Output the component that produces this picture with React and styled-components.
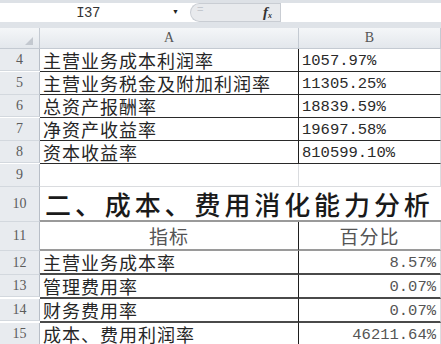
import React from "react";
import styled, { createGlobalStyle } from "styled-components";

const GlobalStyle = createGlobalStyle`
  html, body { margin: 0; padding: 0; background: #fff; overflow: hidden; }
  #root { width: 441px; height: 344px; overflow: hidden; }
`;

const CJK = `"Noto Sans CJK SC", "Noto Sans", sans-serif`;
const MONO = `"Liberation Mono", "Noto Sans CJK SC", monospace`;

const rows = [
  { n: 4, h: 22, a: "主营业务成本利润率", b: "1057.97%", line: "thin" },
  { n: 5, h: 23, a: "主营业务税金及附加利润率", b: "11305.25%", line: "thin" },
  { n: 6, h: 22, a: "总资产报酬率", b: "18839.59%", line: "thin" },
  { n: 7, h: 23, a: "净资产收益率", b: "19697.58%", line: "thin" },
  { n: 8, h: 22, a: "资本收益率", b: "810599.10%", line: "thin" },
  { n: 9, h: 23, a: "", b: "", line: "grid" },
];

const rowsBottom = [
  { n: 12, h: 24, a: "主营业务成本率", b: "8.57%" },
  { n: 13, h: 22, a: "管理费用率", b: "0.07%" },
  { n: 14, h: 22, a: "财务费用率", b: "0.07%" },
  { n: 15, h: 23, a: "成本、费用利润率", b: "46211.64%" },
];

export default function App() {
  return (
    <>
      <GlobalStyle />
      <Page>
        <FormulaBar>
          <NameBox>
            <NameText>I37</NameText>
            <Arrow>▼</Arrow>
          </NameBox>
          <FxBox>
            <EqualsMark>=</EqualsMark>
            <Fx>
              f<sub>x</sub>
            </Fx>
          </FxBox>
          <FormulaInput />
        </FormulaBar>
        <Sheet>
          <Corner>
            <svg width="8" height="8" viewBox="0 0 8 8">
              <polygon points="8,0 8,8 0,8" fill="#c3c8cf" />
            </svg>
          </Corner>
          <ColHead>A</ColHead>
          <ColHead>B</ColHead>

          {rows.map((r) => (
            <React.Fragment key={r.n}>
              <RowHead $h={r.h}>{r.n}</RowHead>
              <Cell $line={r.line} $divider={r.line === "thin"}>
                {r.a}
              </Cell>
              <NumCell $line={r.line}>{r.b}</NumCell>
            </React.Fragment>
          ))}

          <RowHead $h={35}>10</RowHead>
          <TitleCell>二、成本、费用消化能力分析</TitleCell>

          <RowHead $h={29}>11</RowHead>
          <HeadCell $divider>指标</HeadCell>
          <HeadCell>百分比</HeadCell>

          {rowsBottom.map((r) => (
            <React.Fragment key={r.n}>
              <RowHead $h={r.h}>{r.n}</RowHead>
              <Cell $line="thick" $divider>
                {r.a}
              </Cell>
              <NumCell $line="thick" $right>
                {r.b}
              </NumCell>
            </React.Fragment>
          ))}
        </Sheet>
      </Page>
    </>
  );
}

const Page = styled.div`
  width: 441px;
  height: 344px;
  display: flex;
  flex-direction: column;
  background: #fff;
`;

const FormulaBar = styled.div`
  display: flex;
  height: 22px;
  border-top: 3px solid #dde1e6;
  border-bottom: 6px solid #dfe3e8;
  background: #fff;
`;

const NameBox = styled.div`
  width: 190px;
  display: flex;
  align-items: center;
`;

const NameText = styled.span`
  width: 176px;
  text-align: center;
  font-family: ${MONO};
  font-size: 14px;
  color: #333;
  letter-spacing: -0.5px;
`;

const Arrow = styled.span`
  font-size: 7px;
  color: #222;
  line-height: 1;
  margin-left: -4px;
`;

const FxBox = styled.div`
  width: 90px;
  display: flex;
  align-items: center;
  justify-content: space-between;
  background: #e8eaed;
  border: 1px solid #c9cdd3;
  border-right: none;
  border-radius: 10px 0 0 10px;
  box-sizing: border-box;
  padding: 0 8px 0 6px;
`;

const EqualsMark = styled.span`
  font-family: "Liberation Sans", sans-serif;
  font-size: 11px;
  color: #c4c8ce;
  margin-top: -8px;
`;

const Fx = styled.span`
  font-family: "Liberation Serif", serif;
  font-style: italic;
  font-weight: bold;
  font-size: 15px;
  color: #333;
  sub {
    font-size: 8px;
    vertical-align: -1px;
  }
`;

const FormulaInput = styled.div`
  flex: 1;
  background: #fff;
  border-left: 1px solid #c9cdd3;
`;

const Sheet = styled.div`
  display: grid;
  grid-template-columns: 40px 259px 142px;
`;

const headerBg = `linear-gradient(#f4f6f8, #e3e7ec)`;

const Corner = styled.div`
  height: 21px;
  box-sizing: border-box;
  background: ${headerBg};
  border-right: 1px solid #c4cad2;
  border-bottom: 1px solid #c4cad2;
  display: flex;
  align-items: flex-end;
  justify-content: flex-end;
  padding: 0 6px 3px 0;
`;

const ColHead = styled.div`
  height: 21px;
  box-sizing: border-box;
  background: ${headerBg};
  border-right: 1px solid #c4cad2;
  border-bottom: 1px solid #c4cad2;
  display: flex;
  align-items: center;
  justify-content: center;
  font-family: "Liberation Serif", serif;
  font-size: 14px;
  color: #555;
`;

const RowHead = styled.div`
  height: ${(p) => p.$h}px;
  box-sizing: border-box;
  background: #e8ebef;
  border-right: 1px solid #b8bec7;
  border-bottom: 1px solid #d3d8de;
  display: flex;
  align-items: center;
  justify-content: center;
  font-family: "Liberation Serif", serif;
  font-size: 14px;
  color: #5c5c5c;
`;

const lines = {
  grid: "1px solid #dadcdf",
  thin: "1.5px solid #2a2a2a",
  thick: "2px solid #4a4a4a",
  gray: "2px solid #9a9a9a",
};

const Cell = styled.div`
  min-width: 0;
  box-sizing: border-box;
  display: flex;
  align-items: center;
  padding: 0 3px;
  white-space: nowrap;
  border-bottom: ${(p) => lines[p.$line]};
  border-right: ${(p) => (p.$divider ? "1px solid #1e1e1e" : lines.grid)};
  font-family: ${CJK};
  font-size: 18px;
  line-height: 20px;
  letter-spacing: 1px;
  color: #262626;
`;

const NumCell = styled(Cell)`
  justify-content: ${(p) => (p.$right ? "flex-end" : "flex-start")};
  padding: ${(p) => (p.$right ? "2px 4px 0 0" : "2px 0 0 3px")};
  font-family: ${MONO};
  font-size: 15.5px;
  letter-spacing: 0;
  color: ${(p) => (p.$right ? "#555" : "#2a2a2a")};
  border-right: ${lines.grid};
`;

const TitleCell = styled.div`
  grid-column: span 2;
  box-sizing: border-box;
  display: flex;
  align-items: center;
  padding: 0 0 0 5px;
  border-bottom: ${lines.gray};
  font-family: ${CJK};
  font-size: 26px;
  font-weight: 500;
  letter-spacing: 3.9px;
  line-height: 30px;
  color: #1a1a1a;
  white-space: nowrap;
`;

const HeadCell = styled.div`
  box-sizing: border-box;
  display: flex;
  align-items: center;
  justify-content: center;
  border-bottom: ${lines.gray};
  border-right: ${(p) => (p.$divider ? "1px solid #1e1e1e" : lines.grid)};
  font-family: ${CJK};
  font-size: 19px;
  letter-spacing: 1px;
  color: #555;
`;
